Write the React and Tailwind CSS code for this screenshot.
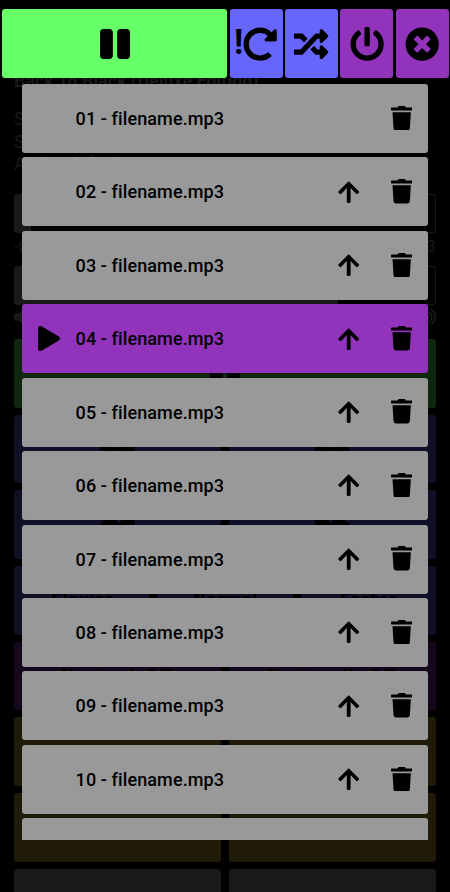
import React from "react";
import {
  FaPause,
  FaRedoAlt,
  FaRandom,
  FaPowerOff,
  FaTimesCircle,
  FaTrash,
  FaArrowUp,
  FaPlay,
  FaBackward,
  FaForward,
  FaVolumeOff,
  FaVolumeUp,
} from "react-icons/fa";

const CURRENT = 4;
const TRACKS = Array.from({ length: 10 }, (_, i) => i + 1);

function HeaderButton({ className, children }) {
  return (
    <button className={`flex h-full items-center justify-center rounded-[3px] ${className}`}>
      {children}
    </button>
  );
}

function Header() {
  return (
    <header className="flex h-[69px] w-full shrink-0 gap-[2.4px] pr-[1.4px] pl-[1.6px]">
      <HeaderButton className="min-w-0 flex-1 bg-[#66ff66]">
        <FaPause className="h-[34.3px] w-[30px]" />
      </HeaderButton>
      <HeaderButton className="w-[52.9px] bg-[#6666ff] pr-px">
        <span className="-mt-1 font-['Roboto'] text-[34.3px] leading-none font-bold">!</span>
        <FaRedoAlt className="size-[34.3px] shrink-0" />
      </HeaderButton>
      <HeaderButton className="w-[52.9px] bg-[#6666ff]">
        <FaRandom className="size-[34.3px]" />
      </HeaderButton>
      <HeaderButton className="w-[52.9px] bg-[#9133bb]">
        <FaPowerOff className="size-[34.3px]" />
      </HeaderButton>
      <HeaderButton className="w-[52.9px] bg-[#9133bb]">
        <FaTimesCircle className="size-[34.3px]" />
      </HeaderButton>
    </header>
  );
}

function TrackRow({ number }) {
  const active = number === CURRENT;
  return (
    <li
      className={`flex h-[69px] shrink-0 items-center rounded-[3px] pr-[15.8px] pl-[15.5px] ${
        active ? "bg-[#9133bb]" : "bg-[#999999]"
      }`}
    >
      <span className="w-[37.7px] shrink-0">
        {active && <FaPlay className="h-[25px] w-[22px]" />}
      </span>
      <span className="flex-1 text-[18px] font-medium tracking-[0.1px] whitespace-nowrap">
        {String(number).padStart(2, "0")} - filename.mp3
      </span>
      {number > 1 && <FaArrowUp className="mr-[31px] h-[24.5px] w-[21.4px]" />}
      <FaTrash className="mb-px h-[24.5px] w-[21.4px]" />
    </li>
  );
}

function Tile({ className, children }) {
  return (
    <div
      className={`flex h-[68.7px] min-w-0 flex-1 items-center justify-center rounded-[3px] font-['DejaVu_Sans'] text-base font-bold whitespace-nowrap text-black ${className}`}
    >
      {children}
    </div>
  );
}

function TileRow({ children }) {
  return <div className="flex shrink-0 gap-2">{children}</div>;
}

function Player() {
  return (
    <div className="flex h-full flex-col overflow-hidden px-[14px] pt-[70px] text-[#191919]">
      <h1 className="h-[38px] shrink-0 text-[17.6px] leading-[22px] font-bold tracking-[0.15px] whitespace-nowrap">
        Back To Black (Deluxe Edition)
      </h1>
      <div className="h-[86px] shrink-0 text-[17.6px] leading-[22.5px]">
        <p>Season: 1</p>
        <p>Subtitles: off</p>
        <p>Audio: default</p>
      </div>
      <div className="h-[38.5px] shrink-0 rounded-[3px] border border-[#191919]">
        <div className="h-full w-4 bg-[#191919]" />
      </div>
      <div className="flex h-[33.5px] shrink-0 items-center justify-between pb-1 text-[17.2px]">
        <span>-0:03</span>
        <span>3:33</span>
      </div>
      <div className="h-[38.5px] shrink-0 rounded-[3px] border border-[#191919]">
        <div className="h-full w-[323px] bg-[#191919]" />
      </div>
      <div className="flex h-[34.5px] shrink-0 items-center justify-between pb-[9px] text-[20px]">
        <FaVolumeOff className="-ml-[5px]" />
        <FaVolumeUp />
      </div>
      <div className="flex flex-col gap-[7px]">
        <TileRow>
          <Tile className="bg-[#0f260f]">
            <FaPause className="h-[34.3px] w-[30px]" />
          </Tile>
        </TileRow>
        <TileRow>
          <Tile className="bg-[#0f0f26]"><FaBackward className="size-[34.3px]" /></Tile>
          <Tile className="bg-[#0f0f26]"><FaForward className="size-[34.3px]" /></Tile>
        </TileRow>
        <TileRow>
          <Tile className="bg-[#0f0f26]"><FaBackward className="size-[34.3px]" /></Tile>
          <Tile className="bg-[#0f0f26]"><FaForward className="size-[34.3px]" /></Tile>
        </TileRow>
        <TileRow>
          <Tile className="bg-[#0f0f26]">Slower</Tile>
          <Tile className="bg-[#0f0f26]">Normal</Tile>
          <Tile className="bg-[#0f0f26]">Faster</Tile>
        </TileRow>
        <TileRow>
          <Tile className="bg-[#16081c]">Next sub 2/2</Tile>
          <Tile className="bg-[#16081c]">Next audio 1/1</Tile>
        </TileRow>
        <TileRow>
          <Tile className="bg-[#201a08]">Sub delay -</Tile>
          <Tile className="bg-[#201a08]">Sub delay +</Tile>
        </TileRow>
        <TileRow>
          <Tile className="bg-[#201a08]" />
          <Tile className="bg-[#201a08]" />
        </TileRow>
        <TileRow>
          <Tile className="bg-[#191919]" />
          <Tile className="bg-[#191919]" />
        </TileRow>
      </div>
    </div>
  );
}

export default function App() {
  return (
    <main className="relative h-[892px] w-[450px] overflow-hidden bg-black font-['Roboto',sans-serif] text-black">
      <Player />
      <div className="absolute inset-0 flex flex-col pt-[9.2px]">
        <Header />
        <ul className="mr-[22.3px] ml-[22.4px] mt-[5.8px] flex h-[756px] flex-col gap-[4.45px] overflow-hidden">
          {TRACKS.map((n) => (
            <TrackRow key={n} number={n} />
          ))}
          <li className="h-[69px] shrink-0 rounded-[3px] bg-[#999999]" />
        </ul>
      </div>
    </main>
  );
}
